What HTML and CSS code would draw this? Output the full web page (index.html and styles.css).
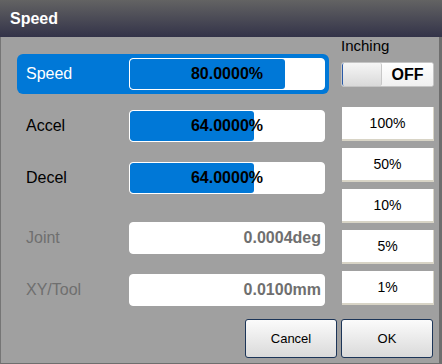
FILE: index.html
```html
<!DOCTYPE html>
<html>
<head>
<meta charset="utf-8">
<link rel="stylesheet" href="styles.css">
</head>
<body>
<div class="window">
  <div class="title">Speed</div>
  <div class="panel">
    <div class="content">
      <div class="left">
        <div class="row active">
          <span class="label">Speed</span>
          <div class="bar"><div class="fill" style="width:80%"></div><span class="val">80.0000%</span></div>
        </div>
        <div class="row">
          <span class="label">Accel</span>
          <div class="bar"><div class="fill" style="width:64%"></div><span class="val">64.0000%</span></div>
        </div>
        <div class="row">
          <span class="label">Decel</span>
          <div class="bar"><div class="fill" style="width:64%"></div><span class="val">64.0000%</span></div>
        </div>
        <div class="row disabled gap-top">
          <span class="label">Joint</span>
          <div class="bar field"><span class="num">0.0004deg</span></div>
        </div>
        <div class="row disabled">
          <span class="label">XY/Tool</span>
          <div class="bar field"><span class="num">0.0100mm</span></div>
        </div>
      </div>
      <div class="right">
        <div class="inching">Inching</div>
        <div class="toggle"><div class="knob"></div><div class="state">OFF</div></div>
        <div class="presets">
          <div class="preset">100%</div>
          <div class="preset">50%</div>
          <div class="preset">10%</div>
          <div class="preset">5%</div>
          <div class="preset">1%</div>
        </div>
      </div>
    </div>
    <div class="footer">
      <div class="btn">Cancel</div>
      <div class="btn">OK</div>
    </div>
  </div>
</div>
</body>
</html>
```
FILE: styles.css
```css
* { box-sizing: border-box; }
html, body { margin: 0; padding: 0; }
body {
  width: 442px;
  height: 364px;
  overflow: hidden;
  font-family: "Liberation Sans", Arial, sans-serif;
  background: #a0a0a0;
}
.window {
  width: 442px;
  height: 364px;
  display: flex;
  flex-direction: column;
}
.title {
  height: 37px;
  flex: none;
  background: linear-gradient(#636363, #333349);
  color: #fff;
  font-weight: bold;
  font-size: 16px;
  line-height: 37px;
  padding-left: 10px;
}
.panel {
  flex: 1;
  background: #a0a0a0;
  border-left: 1px solid #757575;
  border-right: 3px solid #6e6e6e;
  border-bottom: 1px solid #6e6e6e;
  padding-left: 16px;
  padding-right: 6px;
}
.content {
  display: flex;
  gap: 12px;
}
.left {
  width: 312px;
  margin-top: 17px;
  display: flex;
  flex-direction: column;
  gap: 12px;
}
.row {
  height: 40px;
  display: flex;
  align-items: center;
  padding-left: 9px;
  padding-right: 4px;
  border-radius: 6px;
  font-size: 16px;
  color: #000;
}
.row.gap-top { margin-top: 8px; }
.row.active { background: #0078d7; }
.row.active .label { color: #fff; }
.row.disabled .label { color: #6f6f6f; }
.label { width: 103px; flex: none; }
.bar {
  width: 196px;
  height: 32px;
  background: #fff;
  border: 1px solid #fff;
  border-radius: 4px;
  display: grid;
  overflow: hidden;
}
.fill {
  grid-area: 1 / 1;
  background: #0078d7;
  border-radius: 3px;
  height: 100%;
}
.val {
  grid-area: 1 / 1;
  align-self: center;
  justify-self: center;
  font-weight: bold;
  font-size: 16px;
  color: #000;
}
.field {
  align-items: center;
  justify-content: end;
  padding-right: 3px;
}
.num {
  font-weight: bold;
  font-size: 16px;
  color: #6f6f6f;
}
.right {
  width: 93px;
  display: flex;
  flex-direction: column;
}
.inching {
  font-size: 15px;
  line-height: 18px;
  color: #000;
}
.toggle {
  margin-top: 7px;
  height: 25px;
  display: flex;
  border: 1px solid #c4c4c4;
  border-radius: 3px;
  overflow: hidden;
  background: #fff;
}
.knob {
  width: 40px;
  border-left: 1px solid #2a5aa8;
  border-right: 1px solid #c8c8c8;
  background: linear-gradient(#f6f6f6, #d9d9d9);
  border-radius: 2px;
}
.state {
  flex: 1;
  background: linear-gradient(#ffffff, #f0f0f0);
  font-weight: bold;
  font-size: 16px;
  line-height: 23px;
  text-align: center;
}
.presets {
  margin-top: 20px;
  display: flex;
  flex-direction: column;
  gap: 7px;
}
.preset {
  margin-left: 1px;
  width: 92px;
  height: 34px;
  background: #fff;
  border-right: 1px solid #d8d4c6;
  border-bottom: 2px solid #d8d4c6;
  font-size: 14px;
  line-height: 32px;
  text-align: center;
  color: #000;
}
.footer {
  margin-top: 9px;
  display: flex;
  justify-content: flex-end;
  gap: 4px;
}
.btn {
  width: 92px;
  height: 39px;
  border: 1px solid #1c3558;
  border-radius: 3px;
  background: linear-gradient(#fbfbfb, #dadada);
  font-size: 13px;
  line-height: 37px;
  text-align: center;
  color: #000;
}
```
